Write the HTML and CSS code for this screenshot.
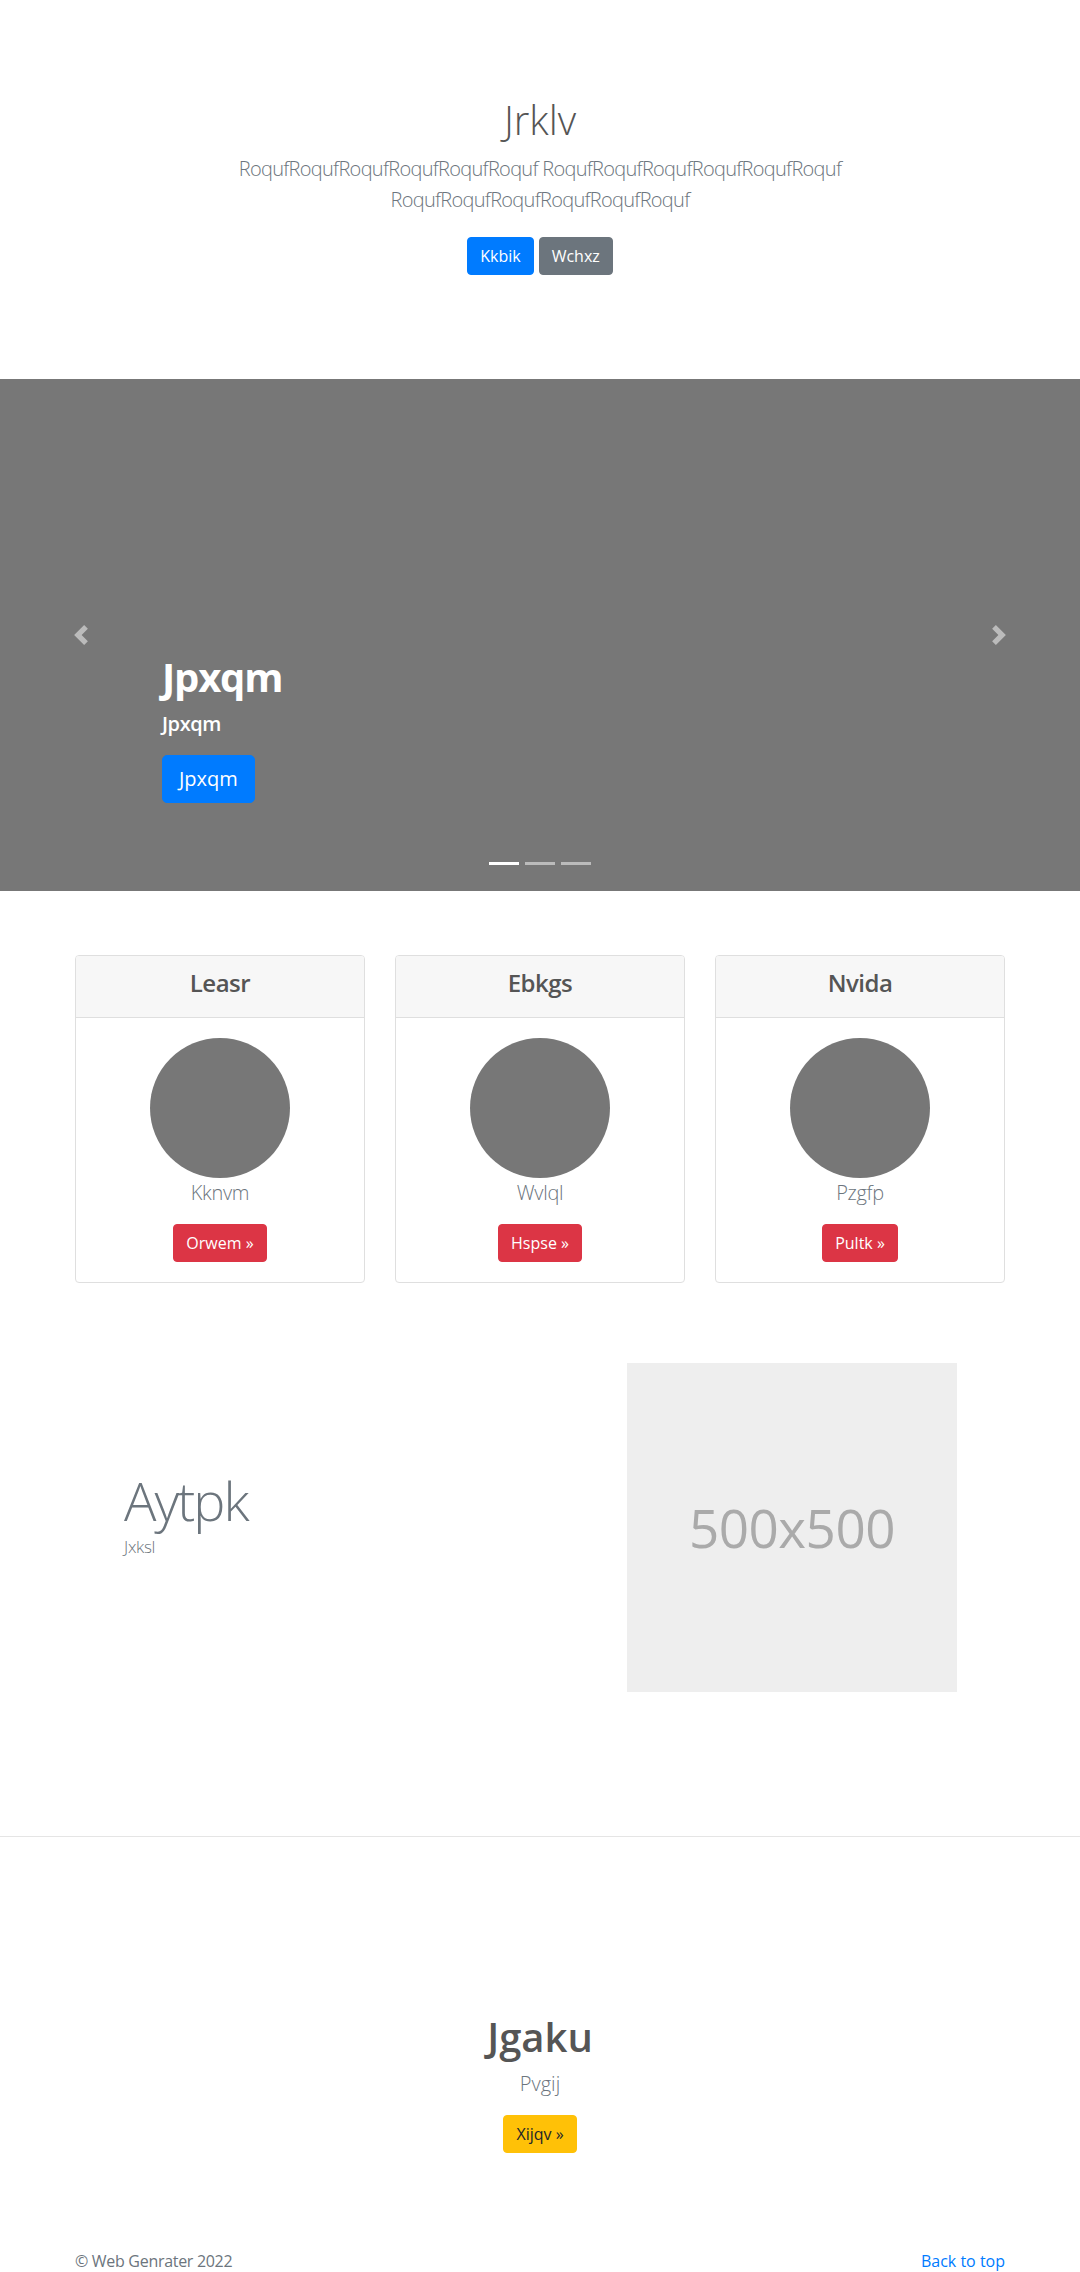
FILE: index.html
```html
<!DOCTYPE html>
<html lang="en">
<head>
<meta charset="utf-8">
<title>Jrklv</title>
<link rel="stylesheet" href="styles.css">
</head>
<body>
<section class="hero">
  <h1 class="hero-title">Jrklv</h1>
  <p class="lead">RoqufRoqufRoqufRoqufRoqufRoquf RoqufRoqufRoqufRoqufRoqufRoquf RoqufRoqufRoqufRoqufRoqufRoquf</p>
  <p class="hero-actions">
    <a class="btn btn-primary" href="#">Kkbik</a>
    <a class="btn btn-secondary" href="#">Wchxz</a>
  </p>
</section>

<div class="carousel">
  <ol class="indicators">
    <li class="active"></li>
    <li></li>
    <li></li>
  </ol>
  <a class="control control-prev" href="#"><svg viewBox="0 0 8 8" width="20" height="20"><path fill="#fff" d="M5.25 0l-4 4 4 4 1.5-1.5-2.5-2.5 2.5-2.5-1.5-1.5z"/></svg></a>
  <a class="control control-next" href="#"><svg viewBox="0 0 8 8" width="20" height="20"><path fill="#fff" d="M2.75 0l-1.5 1.5 2.5 2.5-2.5 2.5 1.5 1.5 4-4-4-4z"/></svg></a>
  <div class="caption">
    <h1 class="caption-title">Jpxqm</h1>
    <p class="caption-text">Jpxqm</p>
    <p class="caption-action"><a class="btn btn-lg btn-primary" href="#">Jpxqm</a></p>
  </div>
</div>

<div class="container cards">
  <div class="card">
    <div class="card-header"><h4>Leasr</h4></div>
    <div class="card-body">
      <div class="avatar"></div>
      <p class="card-name">Kknvm</p>
      <a class="btn btn-danger" href="#">Orwem »</a>
    </div>
  </div>
  <div class="card">
    <div class="card-header"><h4>Ebkgs</h4></div>
    <div class="card-body">
      <div class="avatar"></div>
      <p class="card-name">Wvlql</p>
      <a class="btn btn-danger" href="#">Hspse »</a>
    </div>
  </div>
  <div class="card">
    <div class="card-header"><h4>Nvida</h4></div>
    <div class="card-body">
      <div class="avatar"></div>
      <p class="card-name">Pzgfp</p>
      <a class="btn btn-danger" href="#">Pultk »</a>
    </div>
  </div>
</div>

<div class="container feature">
  <div class="feature-text">
    <h2 class="feature-title">Aytpk</h2>
    <p class="feature-sub">Jxksl</p>
  </div>
  <div class="feature-media">
    <div class="placeholder">500x500</div>
  </div>
</div>

<hr class="divider">

<section class="cta">
  <h1 class="cta-title">Jgaku</h1>
  <p class="cta-text">Pvgij</p>
  <a class="btn btn-warning" href="#">Xijqv »</a>
</section>

<footer class="container footer">
  <p class="copy">© Web Genrater 2022</p>
  <a class="back" href="#">Back to top</a>
</footer>
</body>
</html>
```

FILE: styles.css
```css
* { box-sizing: border-box; }
html, body { margin: 0; padding: 0; }
body {
  font-family: "Open Sans", "Noto Sans", "Liberation Sans", sans-serif;
  font-size: 16px;
  line-height: 1.5;
  color: #212529;
  background: #fff;
}
a { text-decoration: none; }
h1, h2, h4, p { margin: 0; }

.container {
  width: 930px;
  margin: 0 auto;
}

/* buttons */
.btn {
  display: inline-block;
  padding: 6px 12px;
  font-size: 16px;
  line-height: 24px;
  border: 1px solid transparent;
  border-radius: 4px;
  color: #fff;
  vertical-align: middle;
}
.btn-lg { padding: 8px 16px; font-size: 20px; line-height: 30px; border-radius: 5px; }
.btn-primary { background: #007bff; border-color: #007bff; }
.btn-secondary { background: #6c757d; border-color: #6c757d; }
.btn-danger { background: #dc3545; border-color: #dc3545; }
.btn-warning { background: #ffc107; border-color: #ffc107; color: #212529; }

/* hero */
.hero {
  text-align: center;
  padding: 96px 0 96px;
}
.hero-title {
  font-size: 40px;
  font-weight: 300;
  line-height: 48px;
  color: #555;
  margin-bottom: 10px;
}
.lead {
  max-width: 720px;
  margin: 0 auto 22px;
  font-size: 20px;
  font-weight: 300;
  line-height: 30.5px;
  letter-spacing: -0.7px;
  color: #6c757d;
}
.hero-actions {
  display: flex;
  justify-content: center;
  gap: 5px;
  margin: 8px 0;
}

/* carousel */
.carousel {
  position: relative;
  height: 512px;
  background: #777;
}
.indicators {
  position: absolute;
  left: 0;
  right: 0;
  bottom: 26px;
  margin: 0;
  padding: 0;
  list-style: none;
  display: flex;
  justify-content: center;
  gap: 6px;
}
.indicators li {
  width: 30px;
  height: 3px;
  background: rgba(255,255,255,.5);
}
.indicators li.active { background: #fff; }
.control {
  position: absolute;
  top: 0;
  bottom: 0;
  width: 162px;
  display: flex;
  align-items: center;
  justify-content: center;
  opacity: .5;
}
.control svg { display: block; }
.control-prev { left: 0; }
.control-next { right: 0; }
.caption {
  position: absolute;
  left: 162px;
  right: 162px;
  bottom: 88px;
  color: #fff;
}
.caption-title {
  font-size: 40px;
  font-weight: 700;
  line-height: 48px;
  letter-spacing: -1.2px;
  margin-bottom: 8px;
}
.caption-text {
  font-size: 20px;
  font-weight: 600;
  line-height: 30px;
  letter-spacing: -0.4px;
  margin-bottom: 16px;
}

/* cards */
.cards {
  margin-top: 64px;
  display: grid;
  grid-template-columns: repeat(3, 1fr);
  gap: 30px;
}
.card {
  border: 1px solid #dfdfdf;
  border-radius: 4px;
  text-align: center;
  overflow: hidden;
}
.card-header {
  background: #f7f7f7;
  border-bottom: 1px solid #dfdfdf;
  padding: 12px 20px 12px;
}
.card-header h4 {
  font-size: 24px;
  font-weight: 600;
  line-height: 29px;
  letter-spacing: -0.5px;
  margin-bottom: 8px;
  color: #555;
}
.card-body {
  padding: 20px;
}
.avatar {
  width: 140px;
  height: 140px;
  border-radius: 50%;
  background: #777;
  margin: 0 auto;
}
.card-name {
  font-size: 20px;
  font-weight: 300;
  line-height: 30px;
  letter-spacing: -0.3px;
  color: #6c757d;
  margin-bottom: 16px;
}

/* feature */
.feature {
  margin-top: 80px;
  display: flex;
  align-items: center;
}
.feature-text {
  flex: 1;
  padding-left: 49px;
  padding-bottom: 28px;
}
.feature-title {
  font-size: 54px;
  font-weight: 300;
  line-height: 66px;
  letter-spacing: -2px;
  color: #6c757d;
}
.feature-sub {
  font-size: 17px;
  font-weight: 300;
  line-height: 28px;
  letter-spacing: -0.3px;
  color: #6c757d;
}
.feature-media {
  padding-right: 48px;
}
.placeholder {
  width: 330px;
  height: 329px;
  background: #eee;
  color: #aaa;
  font-size: 53px;
  letter-spacing: -0.5px;
  display: flex;
  align-items: center;
  justify-content: center;
}

.divider {
  margin: 144px 0 0;
  border: 0;
  border-top: 1px solid #e5e5e5;
}

/* cta */
.cta {
  text-align: center;
  padding-top: 176px;
}
.cta-title {
  font-size: 40px;
  font-weight: 600;
  line-height: 48px;
  color: #555;
  margin-bottom: 8px;
}
.cta-text {
  font-size: 20px;
  font-weight: 300;
  line-height: 30px;
  color: #6c757d;
  margin-bottom: 16px;
}

/* footer */
.footer {
  display: flex;
  justify-content: space-between;
  align-items: center;
  padding: 96px 0 48px;
  color: #6c757d;
}
.copy { letter-spacing: -0.3px; }
.back { color: #007bff; }
```
